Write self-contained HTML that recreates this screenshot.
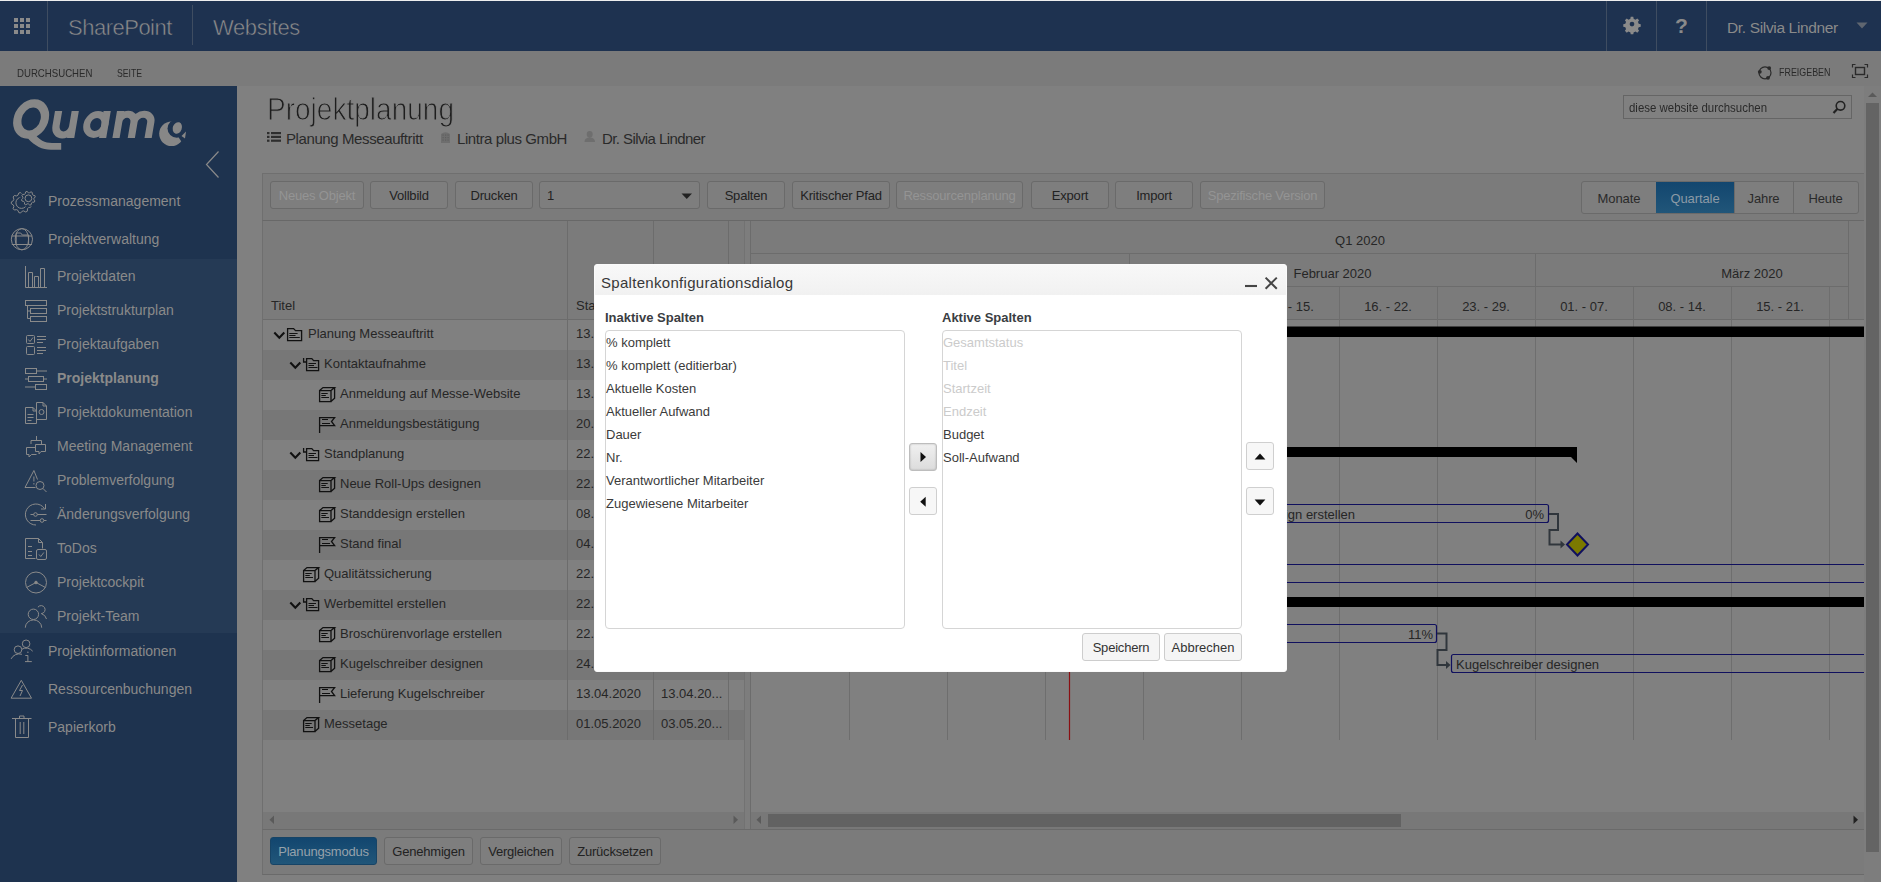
<!DOCTYPE html>
<html><head><meta charset="utf-8">
<style>
*{box-sizing:border-box;margin:0;padding:0}
html,body{width:1881px;height:882px;overflow:hidden;background:#808080;font-family:"Liberation Sans",sans-serif;color:#222}
.a{position:absolute}
.t{position:absolute;white-space:nowrap;line-height:1}
#topline{left:0;top:0;width:1881px;height:1px;background:#eeeeef}
#topbar{left:0;top:1px;width:1881px;height:50px;background:#1e3250}
.sep{position:absolute;width:1px;background:#3f4d61}
#subbar{left:0;top:51px;width:1881px;height:35px;background:#7b7b7b}
#sidebar{left:0;top:86px;width:237px;height:796px;background:#1e334f}
#submenu{left:0;top:259px;width:237px;height:374px;background:#253a55}
.nav{position:absolute;white-space:nowrap;line-height:1;font-size:14px;color:#8a8a8a}
.ic{position:absolute;fill:none;stroke:#8a8a8a;stroke-width:1.1}
#vscroll{left:1864px;top:86px;width:17px;height:796px;background:#7d7d7d}
#vthumb{left:1866px;top:103px;width:13px;height:749px;background:#646464}
.btn{position:absolute;height:28px;border:1px solid #6a6a6a;border-radius:3px;background:#7e7e7e;font-size:13px;color:#222;text-align:center;line-height:27px;white-space:nowrap}
.btn.dis{color:#949494}
.row{position:absolute;left:263px;width:481px;height:30px}
.row.d{background:#777777}
.cell{position:absolute;white-space:nowrap;line-height:1;font-size:13px;color:#222}
.vl{position:absolute;width:1px;background:#6c6c6c}
.hl{position:absolute;height:1px;background:#6c6c6c}
</style></head><body>
<div id="topline" class="a"></div>
<div id="topbar" class="a">
  <!-- waffle -->
  <svg class="a" style="left:14px;top:17px" width="17" height="17" viewBox="0 0 17 17" fill="#8a8a8a">
    <rect x="0" y="0" width="4" height="4"/><rect x="6" y="0" width="4" height="4"/><rect x="12" y="0" width="4" height="4"/>
    <rect x="0" y="6" width="4" height="4"/><rect x="6" y="6" width="4" height="4"/><rect x="12" y="6" width="4" height="4"/>
    <rect x="0" y="12" width="4" height="4"/><rect x="6" y="12" width="4" height="4"/><rect x="12" y="12" width="4" height="4"/>
  </svg>
  <div class="sep" style="left:47px;top:0;height:50px"></div>
  <div class="t" style="left:68px;top:15.5px;font-size:22px;color:#8c8c8c;letter-spacing:-0.5px;-webkit-text-stroke:0.5px #1e3250">SharePoint</div>
  <div class="sep" style="left:192px;top:4px;height:40px"></div>
  <div class="t" style="left:213px;top:15.5px;font-size:22px;color:#8c8c8c;letter-spacing:-0.4px;-webkit-text-stroke:0.5px #1e3250">Websites</div>
  <div class="sep" style="left:1606px;top:0;height:50px"></div>
  <div class="sep" style="left:1656px;top:0;height:50px"></div>
  <div class="sep" style="left:1706px;top:0;height:50px"></div>
</div>
<div id="subbar" class="a">
  <div class="t" style="left:17px;top:17px;font-size:11px;color:#2a2a2a;transform:scaleX(0.875);transform-origin:0 0">DURCHSUCHEN</div>
  <div class="t" style="left:117px;top:17px;font-size:11px;color:#2a2a2a;transform:scaleX(0.79);transform-origin:0 0">SEITE</div>
</div>
<div id="sidebar" class="a"><div id="submenu" class="a" style="top:173px"></div></div>
<svg class="a" style="left:0;top:0" width="237" height="882" viewBox="0 0 237 882">
 <g transform="matrix(1,0,-0.17,1,23.46,0)" fill="none" stroke="#878787" stroke-width="7.2">
  <ellipse cx="27.9" cy="119" rx="13.6" ry="15.6" stroke-width="8.2"/>
  <path d="M54 111 V126 A8.33 9 0 0 0 70.66 126 M70.66 111 V138"/>
  <ellipse cx="93.6" cy="124.5" rx="9.1" ry="10" stroke-width="6.8"/>
  <path d="M102.6 111 V138"/>
  <path d="M116 111 V138 M116 122 A7.65 7.75 0 0 1 131.3 122 V138 M131.3 122 A8.4 7.75 0 0 1 148.1 122 V138"/>
 </g>
 <path fill="#878787" d="M34 133 C39 140, 45 143, 52 143 L61.2 143 L61.2 149.8 L51 149.8 C42 149.8, 35 146, 28 138.5 Z"/>
 <g fill="none" stroke="#8a8a8a" stroke-width="1.2">
  <path d="M218.5 151.5 L206.5 164.5 L218.5 177.5"/>
 </g>
 <g fill="none" stroke="#8a8a8a" stroke-width="1">
  <!-- Prozessmanagement gear -->
<defs><mask id="gm"><rect x="0" y="180" width="60" height="40" fill="#fff"/><circle cx="28.4" cy="198.3" r="8.6" fill="#000"/></mask></defs>
  <path d="M33.90 199.37 L34.88 200.95 L34.24 202.16 L32.38 202.24 L31.53 202.94 L31.11 204.76 L29.80 205.16 L28.42 203.90 L27.33 203.80 L25.75 204.78 L24.54 204.14 L24.46 202.28 L23.76 201.43 L21.94 201.01 L21.54 199.70 L22.80 198.32 L22.90 197.23 L21.92 195.65 L22.56 194.44 L24.42 194.36 L25.27 193.66 L25.69 191.84 L27.00 191.44 L28.38 192.70 L29.47 192.80 L31.05 191.82 L32.26 192.46 L32.34 194.32 L33.04 195.17 L34.86 195.59 L35.26 196.90 L34.00 198.28 L33.90 199.37 Z"/>
  <circle cx="28.4" cy="198.3" r="3.4"/>
  <g mask="url(#gm)"><path d="M29.87 203.53 L31.35 205.44 L30.74 207.11 L28.38 207.62 L27.44 208.74 L27.35 211.16 L25.81 212.04 L23.67 210.91 L22.23 211.17 L20.61 212.96 L18.86 212.65 L17.95 210.41 L16.68 209.68 L14.29 210.01 L13.14 208.65 L13.89 206.35 L13.39 204.97 L11.34 203.69 L11.34 201.91 L13.39 200.63 L13.89 199.25 L13.14 196.95 L14.29 195.59 L16.68 195.92 L17.95 195.19 L18.86 192.95 L20.61 192.64 L22.23 194.43 L23.67 194.69 L25.81 193.56 L27.35 194.44 L27.44 196.86 L28.38 197.98 L30.74 198.49 L31.35 200.16 L29.87 202.07 L29.87 203.53 Z"/><circle cx="21.5" cy="202.8" r="5.6"/></g>
  <!-- Projektverwaltung globe -->
  <circle cx="21.9" cy="239.2" r="10.6"/>
  <ellipse cx="21.9" cy="239.2" rx="6.7" ry="10.6"/>
  <path d="M11.8 236 H32 M11.8 244.5 H32"/>
  <path d="M16.2 244.5 V233 H20.7 L22.3 235 H28.6 V244.5"/>
  <!-- Projektdaten -->
  <path d="M25.5 266 V287.5 H47"/>
  <path d="M28.5 287.5 V272.5 H32.5 V287.5 M34.5 287.5 V276.5 H38.5 V287.5 M40.5 287.5 V268.5 H44.5 V287.5"/>
  <!-- Projektstrukturplan -->
  <rect x="25.5" y="300.5" width="21" height="5"/>
  <rect x="30.5" y="308.5" width="16" height="5"/>
  <rect x="30.5" y="316.5" width="16" height="5"/>
  <path d="M27.5 305.5 V318.5 H30.5 M27.5 311 H30.5"/>
  <!-- Projektaufgaben -->
  <rect x="26.5" y="335.5" width="8" height="8" rx="1"/>
  <rect x="26.5" y="346.5" width="8" height="8" rx="1"/>
  <path d="M28.3 339.5 l1.7 2 l3 -4"/>
  <path d="M37 336.5 h9 M37 339.5 h9 M37 342.5 h6 M37 347.5 h9 M37 350.5 h9 M37 353.5 h6"/>
  <!-- Projektplanung -->
  <rect x="25.5" y="368.5" width="11" height="5"/>
  <path d="M36.5 371 H47"/>
  <rect x="28.5" y="376.5" width="15" height="5"/>
  <path d="M25 379 H28.5 M43.5 379 H47"/>
  <rect x="35.5" y="384.5" width="11" height="5"/>
  <path d="M25 387 H35.5"/>
  <!-- Projektdokumentation -->
  <path d="M25.5 407.5 H33 L36.5 411 V423.5 H25.5 Z M33 407.5 V411 H36.5"/>
  <path d="M27.5 414.5 h6 M27.5 417.5 h6 M27.5 420.5 h4"/>
  <path d="M36.5 419.5 V402.5 H43 L46.5 406 V419.5 Z M43 402.5 V406 H46.5"/>
  <circle cx="41.5" cy="412" r="2.5"/>
  <!-- Meeting Management -->
  <path d="M36.5 436 V440 M31 444 V440.5 H41.5 V444"/>
  <path d="M35.5 444.5 H45.5 V451.5 H41 L39 454 V451.5 H35.5 Z"/>
  <path d="M35 447.5 H26.5 V454.5 H29 L29 457 L31.5 454.5 H36.5"/>
  <!-- Problemverfolgung -->
  <path d="M37.5 479.5 L33.9 470.5 L25 487.5 H35.5"/>
  <path d="M33.9 476.5 V481.5 M33.9 483 V484.5"/>
  <circle cx="40" cy="485.5" r="4"/>
  <path d="M43 488.5 L46.5 492"/>
  <!-- Aenderungsverfolgung -->
  <path d="M44.5 508.5 A10.5 10.5 0 1 0 36 525"/>
  <path d="M45.5 504 V509 H41"/>
  <path d="M30.5 514.5 H46.5 M30.5 520.5 H46.5"/>
  <circle cx="35.5" cy="514.5" r="1.8" fill="#253a55"/>
  <circle cx="42" cy="520.5" r="1.8" fill="#253a55"/>
  <!-- ToDos -->
  <path d="M35.5 558.5 H25.5 V538.5 H38.5 L42.5 542.5 V548.5 M38.5 538.5 V542.5 H42.5"/>
  <path d="M28 546.5 h4 M28 551.5 h4 M28 555.5 h4"/>
  <rect x="36.5" y="549.5" width="10" height="10" rx="1.5"/>
  <path d="M39 554.5 l1.8 2 l3 -4"/>
  <!-- Projektcockpit -->
  <circle cx="36" cy="582.5" r="10.5"/>
  <path d="M26.5 587.5 L36 582.5 L45.5 587.5"/>
  <circle cx="36" cy="582.5" r="1.3" fill="#8a8a8a"/>
  <!-- Projekt-Team -->
  <circle cx="33.4" cy="614.3" r="5.2"/>
  <path d="M25.3 627.7 A8.2 7.8 0 0 1 41.7 627.7"/>
  <path d="M37.9 607.2 A4 4 0 1 1 41.3 613.6 A7.5 7.5 0 0 1 46.5 619"/>
  <!-- Projektinformationen -->
  <circle cx="18" cy="649.7" r="3.8"/>
  <circle cx="26.1" cy="643.8" r="3.8"/>
  <path d="M11.1 658.9 A9 9 0 0 1 21.9 654.3 M21.9 649.2 A8.5 8.5 0 0 1 32.7 651.2"/>
  <path d="M25.3 655.5 H27.9 V661.6 M25 661.6 H31.8"/>
  <circle cx="27.9" cy="652.2" r="0.7" fill="#8a8a8a" stroke="none"/>
  <!-- Ressourcenbuchungen -->
  <path d="M21.3 680.3 L31.5 698.2 H11.1 Z"/>
  <path d="M22.5 685 L19.5 690.5 H22.5 L20 696"/>
  <!-- Papierkorb -->
  <path d="M12 718.5 H31.5 M19.5 718.5 V716 H24 V718.5"/>
  <path d="M15.5 718.5 V737.5 H28.5 V718.5 M20.2 722 V734 M23.8 722 V734"/>
 </g>
 <!-- Quam small logo -->
 <defs><mask id="cm"><rect x="150" y="110" width="50" height="50" fill="#fff"/><circle cx="176.8" cy="128.5" r="9.3" fill="#000"/><path d="M176 133.3 L184.4 146.2 L200 146.2 L200 110 L176 110 Z" fill="#000"/></mask></defs>
 <circle cx="171.5" cy="133.8" r="12.3" fill="#878787" mask="url(#cm)"/>
 <ellipse cx="177.3" cy="127.9" rx="4.5" ry="5.9" transform="rotate(20 177.3 127.9)" fill="#878787"/>
 <path d="M181.5 136 L186 131.5 L185 138.5 Z" fill="#878787"/>
</svg>
<div class="nav" style="left:48px;top:194px">Prozessmanagement</div>
<div class="nav" style="left:48px;top:232px">Projektverwaltung</div>
<div class="nav" style="left:57px;top:269px">Projektdaten</div>
<div class="nav" style="left:57px;top:303px">Projektstrukturplan</div>
<div class="nav" style="left:57px;top:337px">Projektaufgaben</div>
<div class="nav" style="left:57px;top:371px;font-weight:bold">Projektplanung</div>
<div class="nav" style="left:57px;top:405px">Projektdokumentation</div>
<div class="nav" style="left:57px;top:439px">Meeting Management</div>
<div class="nav" style="left:57px;top:473px">Problemverfolgung</div>
<div class="nav" style="left:57px;top:507px">Änderungsverfolgung</div>
<div class="nav" style="left:57px;top:541px">ToDos</div>
<div class="nav" style="left:57px;top:575px">Projektcockpit</div>
<div class="nav" style="left:57px;top:609px">Projekt-Team</div>
<div class="nav" style="left:48px;top:644px">Projektinformationen</div>
<div class="nav" style="left:48px;top:682px">Ressourcenbuchungen</div>
<div class="nav" style="left:48px;top:720px">Papierkorb</div>
<!--MAIN-->
<div class="t" style="left:267px;top:93px;font-size:32px;color:#1e1e1e;transform:scaleX(0.876);transform-origin:0 0;-webkit-text-stroke:1px #808080">Projektplanung</div>
<svg class="a" style="left:0;top:0" width="1881" height="882" viewBox="0 0 1881 882">
 <g fill="#2e2e2e">
  <rect x="267" y="132" width="2.5" height="2.2"/><rect x="271" y="132" width="10" height="2.2"/>
  <rect x="267" y="135.8" width="2.5" height="2.2"/><rect x="271" y="135.8" width="10" height="2.2"/>
  <rect x="267" y="139.6" width="2.5" height="2.2"/><rect x="271" y="139.6" width="10" height="2.2"/>
 </g>
 <g fill="#6e6e6e">
  <path d="M441 134 Q445.5 130.5 450 134 V143 H441 Z"/>
  <path d="M589.7 131 a3 3.2 0 1 1 0 6.4 a3 3.2 0 1 1 0 -6.4 Z M584.5 142 Q584.5 137.5 589.7 137.5 Q595 137.5 595 142 Z"/>
 </g>
 <g fill="#5e5e5e"><rect x="442.5" y="134.5" width="1.2" height="1.2"/><rect x="445" y="134.5" width="1.2" height="1.2"/><rect x="447.5" y="134.5" width="1.2" height="1.2"/>
 <rect x="442.5" y="137" width="1.2" height="1.2"/><rect x="445" y="137" width="1.2" height="1.2"/><rect x="447.5" y="137" width="1.2" height="1.2"/>
 <rect x="442.5" y="139.5" width="1.2" height="1.2"/><rect x="445" y="139.5" width="1.2" height="1.2"/><rect x="447.5" y="139.5" width="1.2" height="1.2"/></g>
</svg>
<div class="t" style="left:286px;top:131px;font-size:15px;color:#2a2a2a;letter-spacing:-0.4px">Planung Messeauftritt</div>
<div class="t" style="left:457px;top:131px;font-size:15px;color:#2a2a2a;letter-spacing:-0.42px">Lintra plus GmbH</div>
<div class="t" style="left:602px;top:131px;font-size:15px;color:#2a2a2a;letter-spacing:-0.58px">Dr. Silvia Lindner</div>
<div class="a" style="left:1623px;top:95px;width:229px;height:24px;border:1px solid #656565"></div>
<div class="t" style="left:1629px;top:101px;font-size:13px;color:#2a2a2a;transform:scaleX(0.88);transform-origin:0 0">diese website durchsuchen</div>
<svg class="a" style="left:1830px;top:99px" width="18" height="18" viewBox="0 0 18 18" fill="none" stroke="#222" stroke-width="1.6">
 <circle cx="10.5" cy="6.8" r="4.3"/><path d="M7.5 9.8 L3.5 14" stroke-width="2.2"/></svg>
<svg class="a" style="left:1752px;top:60px" width="24" height="24" viewBox="0 0 24 24">
 <circle cx="13" cy="12.8" r="6" fill="none" stroke="#2a2a2a" stroke-width="1.2"/>
 <g fill="#2a2a2a"><circle cx="17.2" cy="8.1" r="1.9"/><circle cx="7.8" cy="11.8" r="1.9"/><circle cx="16" cy="17.8" r="1.9"/></g></svg>
<div class="t" style="left:1779px;top:67px;font-size:11px;color:#2a2a2a;transform:scaleX(0.81);transform-origin:0 0">FREIGEBEN</div>
<svg class="a" style="left:1851px;top:63px" width="18" height="16" viewBox="0 0 18 16" fill="none" stroke="#2a2a2a" stroke-width="1.2">
 <path d="M1.5 4.5 V1.5 H4.5 M13.5 1.5 H16.5 V4.5 M16.5 11.5 V14.5 H13.5 M4.5 14.5 H1.5 V11.5"/><rect x="4.5" y="4.5" width="9" height="7" stroke-width="1.4"/></svg>
<div class="a" style="left:262px;top:173px;width:1602px;height:48px;background:#7b7b7b;border-top:1px solid #6f6f6f;border-left:1px solid #6f6f6f;border-bottom:1px solid #686868"></div>
<div class="btn dis" style="left:270px;top:181px;width:94px;letter-spacing:-0.2px">Neues Objekt</div>
<div class="btn" style="left:370px;top:181px;width:78px;letter-spacing:-0.2px">Vollbild</div>
<div class="btn" style="left:455px;top:181px;width:78px;letter-spacing:-0.2px">Drucken</div>
<div class="btn" style="left:707px;top:181px;width:78px;letter-spacing:-0.2px">Spalten</div>
<div class="btn" style="left:792px;top:181px;width:98px;letter-spacing:-0.2px">Kritischer Pfad</div>
<div class="btn dis" style="left:896px;top:181px;width:127px;letter-spacing:-0.2px">Ressourcenplanung</div>
<div class="btn" style="left:1031px;top:181px;width:78px;letter-spacing:-0.2px">Export</div>
<div class="btn" style="left:1115px;top:181px;width:78px;letter-spacing:-0.2px">Import</div>
<div class="btn dis" style="left:1200px;top:181px;width:125px;letter-spacing:-0.2px">Spezifische Version</div>
<div class="btn" style="left:539px;top:181px;width:161px;text-align:left;padding-left:7px">1</div>
<svg class="a" style="left:681px;top:193px" width="12" height="7" viewBox="0 0 12 7"><path d="M0.5 0.5 H11 L5.75 6 Z" fill="#222"/></svg>
<div class="a" style="left:1581px;top:181px;width:278px;height:33px;border:1px solid #6a6a6a;border-radius:3px;background:#7e7e7e"></div>
<div class="a" style="left:1656px;top:182px;width:78px;height:31px;background:linear-gradient(#12466f,#215679)"></div>
<div class="vl" style="left:1734px;top:182px;height:31px;background:#6a6a6a"></div>
<div class="vl" style="left:1793px;top:182px;height:31px;background:#6a6a6a"></div>
<div class="t" style="left:1582px;width:74px;text-align:center;top:192px;font-size:13px;color:#2a2a2a;letter-spacing:-0.1px">Monate</div>
<div class="t" style="left:1656px;width:78px;text-align:center;top:192px;font-size:13px;color:#8c9aa6;letter-spacing:-0.1px">Quartale</div>
<div class="t" style="left:1734px;width:59px;text-align:center;top:192px;font-size:13px;color:#2a2a2a;letter-spacing:-0.1px">Jahre</div>
<div class="t" style="left:1793px;width:65px;text-align:center;top:192px;font-size:13px;color:#2a2a2a;letter-spacing:-0.1px">Heute</div>
<div class="a" style="left:263px;top:221px;width:481px;height:99px;background:#7b7b7b"></div>
<div class="a" style="left:751px;top:221px;width:1113px;height:99px;background:#7b7b7b"></div>
<div class="a" style="left:744px;top:221px;width:7px;height:608px;background:#7d7d7d"></div>
<div class="t" style="left:271px;top:299px;font-size:13px;color:#262626">Titel</div>
<div class="t" style="left:576px;top:299px;font-size:13px;color:#262626">Start</div>
<div class="a" style="left:263px;top:320px;width:481px;height:30px;background:#808080"></div>
<div class="t" style="left:308px;top:327px;font-size:13px;color:#262626">Planung Messeauftritt</div>
<div class="t" style="left:576px;top:327px;font-size:13px;color:#262626">13.03.2020</div>
<div class="a" style="left:263px;top:350px;width:481px;height:30px;background:#777777"></div>
<div class="t" style="left:324px;top:357px;font-size:13px;color:#262626">Kontaktaufnahme</div>
<div class="t" style="left:576px;top:357px;font-size:13px;color:#262626">13.03.2020</div>
<div class="a" style="left:263px;top:380px;width:481px;height:30px;background:#808080"></div>
<div class="t" style="left:340px;top:387px;font-size:13px;color:#262626">Anmeldung auf Messe-Website</div>
<div class="t" style="left:576px;top:387px;font-size:13px;color:#262626">13.03.2020</div>
<div class="a" style="left:263px;top:410px;width:481px;height:30px;background:#777777"></div>
<div class="t" style="left:340px;top:417px;font-size:13px;color:#262626">Anmeldungsbestätigung</div>
<div class="t" style="left:576px;top:417px;font-size:13px;color:#262626">20.03.2020</div>
<div class="a" style="left:263px;top:440px;width:481px;height:30px;background:#808080"></div>
<div class="t" style="left:324px;top:447px;font-size:13px;color:#262626">Standplanung</div>
<div class="t" style="left:576px;top:447px;font-size:13px;color:#262626">22.03.2020</div>
<div class="a" style="left:263px;top:470px;width:481px;height:30px;background:#777777"></div>
<div class="t" style="left:340px;top:477px;font-size:13px;color:#262626">Neue Roll-Ups designen</div>
<div class="t" style="left:576px;top:477px;font-size:13px;color:#262626">22.03.2020</div>
<div class="a" style="left:263px;top:500px;width:481px;height:30px;background:#808080"></div>
<div class="t" style="left:340px;top:507px;font-size:13px;color:#262626">Standdesign erstellen</div>
<div class="t" style="left:576px;top:507px;font-size:13px;color:#262626">08.03.2020</div>
<div class="a" style="left:263px;top:530px;width:481px;height:30px;background:#777777"></div>
<div class="t" style="left:340px;top:537px;font-size:13px;color:#262626">Stand final</div>
<div class="t" style="left:576px;top:537px;font-size:13px;color:#262626">04.03.2020</div>
<div class="a" style="left:263px;top:560px;width:481px;height:30px;background:#808080"></div>
<div class="t" style="left:324px;top:567px;font-size:13px;color:#262626">Qualitätssicherung</div>
<div class="t" style="left:576px;top:567px;font-size:13px;color:#262626">22.03.2020</div>
<div class="a" style="left:263px;top:590px;width:481px;height:30px;background:#777777"></div>
<div class="t" style="left:324px;top:597px;font-size:13px;color:#262626">Werbemittel erstellen</div>
<div class="t" style="left:576px;top:597px;font-size:13px;color:#262626">22.03.2020</div>
<div class="a" style="left:263px;top:620px;width:481px;height:30px;background:#808080"></div>
<div class="t" style="left:340px;top:627px;font-size:13px;color:#262626">Broschürenvorlage erstellen</div>
<div class="t" style="left:576px;top:627px;font-size:13px;color:#262626">22.03.2020</div>
<div class="a" style="left:263px;top:650px;width:481px;height:30px;background:#777777"></div>
<div class="t" style="left:340px;top:657px;font-size:13px;color:#262626">Kugelschreiber designen</div>
<div class="t" style="left:576px;top:657px;font-size:13px;color:#262626">24.03.2020</div>
<div class="a" style="left:263px;top:680px;width:481px;height:30px;background:#808080"></div>
<div class="t" style="left:340px;top:687px;font-size:13px;color:#262626">Lieferung Kugelschreiber</div>
<div class="t" style="left:576px;top:687px;font-size:13px;color:#262626">13.04.2020</div>
<div class="t" style="left:661px;top:687px;font-size:13px;color:#262626">13.04.20...</div>
<div class="a" style="left:263px;top:710px;width:481px;height:30px;background:#777777"></div>
<div class="t" style="left:324px;top:717px;font-size:13px;color:#262626">Messetage</div>
<div class="t" style="left:576px;top:717px;font-size:13px;color:#262626">01.05.2020</div>
<div class="t" style="left:661px;top:717px;font-size:13px;color:#262626">03.05.20...</div>
<svg class="a" style="left:0;top:0" width="1881" height="882" viewBox="0 0 1881 882"><g fill="none" stroke="#111" stroke-width="1.3"><path d="M274.3 332.6 L279.3 337.8 L284.3 332.6" stroke-width="2.1"/><path d="M287.6 340.6 V328.6 H293.6 L295.5 330.6 H301.6 V340.6 Z"/><path d="M289.3 333.5 H297.6 M289.3 335.5 H295.5 M289.3 337.5 H299.8" stroke-width="1.1"/><path d="M290.3 362.6 L295.3 367.8 L300.3 362.6" stroke-width="2.1"/><path d="M303.6 358 V362 H306.5"/><path d="M306.6 370.6 V358.6 H311.8 L313.6 360.6 H318.6 V370.6 Z"/><path d="M308.5 363.5 H316 M308.5 365.5 H314 M308.5 367.5 H317.5" stroke-width="1.1"/><path d="M319.6 390.6 H331 V401.6 H319.6 Z M319.6 390.6 L323 387.6 H334.6 L331 390.6 M334.6 387.6 V398.3 L331 401.6"/><path d="M321.3 393.5 H327.7 M321.3 395.5 H325.8 M321.3 397.5 H329" stroke-width="1.1"/><path d="M319.6 433 V417.6 H334.6 L331.5 421.5 L334.6 425.6 H319.6"/><path d="M322 419.5 H328 M322 423.5 H330" stroke-width="1.1"/><path d="M290.3 452.6 L295.3 457.8 L300.3 452.6" stroke-width="2.1"/><path d="M303.6 448 V452 H306.5"/><path d="M306.6 460.6 V448.6 H311.8 L313.6 450.6 H318.6 V460.6 Z"/><path d="M308.5 453.5 H316 M308.5 455.5 H314 M308.5 457.5 H317.5" stroke-width="1.1"/><path d="M319.6 480.6 H331 V491.6 H319.6 Z M319.6 480.6 L323 477.6 H334.6 L331 480.6 M334.6 477.6 V488.3 L331 491.6"/><path d="M321.3 483.5 H327.7 M321.3 485.5 H325.8 M321.3 487.5 H329" stroke-width="1.1"/><path d="M319.6 510.6 H331 V521.6 H319.6 Z M319.6 510.6 L323 507.6 H334.6 L331 510.6 M334.6 507.6 V518.3 L331 521.6"/><path d="M321.3 513.5 H327.7 M321.3 515.5 H325.8 M321.3 517.5 H329" stroke-width="1.1"/><path d="M319.6 553 V537.6 H334.6 L331.5 541.5 L334.6 545.6 H319.6"/><path d="M322 539.5 H328 M322 543.5 H330" stroke-width="1.1"/><path d="M303.6 570.6 H315 V581.6 H303.6 Z M303.6 570.6 L307 567.6 H318.6 L315 570.6 M318.6 567.6 V578.3 L315 581.6"/><path d="M305.3 573.5 H311.7 M305.3 575.5 H309.8 M305.3 577.5 H313" stroke-width="1.1"/><path d="M290.3 602.6 L295.3 607.8 L300.3 602.6" stroke-width="2.1"/><path d="M303.6 598 V602 H306.5"/><path d="M306.6 610.6 V598.6 H311.8 L313.6 600.6 H318.6 V610.6 Z"/><path d="M308.5 603.5 H316 M308.5 605.5 H314 M308.5 607.5 H317.5" stroke-width="1.1"/><path d="M319.6 630.6 H331 V641.6 H319.6 Z M319.6 630.6 L323 627.6 H334.6 L331 630.6 M334.6 627.6 V638.3 L331 641.6"/><path d="M321.3 633.5 H327.7 M321.3 635.5 H325.8 M321.3 637.5 H329" stroke-width="1.1"/><path d="M319.6 660.6 H331 V671.6 H319.6 Z M319.6 660.6 L323 657.6 H334.6 L331 660.6 M334.6 657.6 V668.3 L331 671.6"/><path d="M321.3 663.5 H327.7 M321.3 665.5 H325.8 M321.3 667.5 H329" stroke-width="1.1"/><path d="M319.6 703 V687.6 H334.6 L331.5 691.5 L334.6 695.6 H319.6"/><path d="M322 689.5 H328 M322 693.5 H330" stroke-width="1.1"/><path d="M303.6 720.6 H315 V731.6 H303.6 Z M303.6 720.6 L307 717.6 H318.6 L315 720.6 M318.6 717.6 V728.3 L315 731.6"/><path d="M305.3 723.5 H311.7 M305.3 725.5 H309.8 M305.3 727.5 H313" stroke-width="1.1"/></g></svg>
<div class="vl" style="left:567px;top:221px;height:519px"></div>
<div class="vl" style="left:653px;top:221px;height:519px"></div>
<div class="vl" style="left:728px;top:221px;height:519px"></div>
<div class="hl" style="left:263px;top:319px;width:481px"></div>
<div class="vl" style="left:744px;top:221px;height:608px;background:#727272"></div>
<div class="vl" style="left:750px;top:221px;height:608px;background:#6c6c6c"></div>
<div class="vl" style="left:262px;top:221px;height:654px;background:#6f6f6f"></div>
<div class="a" style="left:263px;top:812px;width:481px;height:17px;background:#787878"></div>
<svg class="a" style="left:268px;top:815px" width="8" height="10" viewBox="0 0 8 10"><path d="M6 0.5 V9 L1.5 4.75 Z" fill="#5a5a5a"/></svg>
<svg class="a" style="left:732px;top:815px" width="8" height="10" viewBox="0 0 8 10"><path d="M1.5 0.5 V9 L6 4.75 Z" fill="#5a5a5a"/></svg>
<svg class="a" style="left:0;top:0" width="1881" height="882" viewBox="0 0 1881 882" shape-rendering="crispEdges"><path d="M751 253.5 H1848 M751 286.5 H1848 M751 319.5 H1864" stroke="#6c6c6c"/><path d="M1848.5 221 V320 M1129.5 254 V287 M1535.5 254 V287" stroke="#6c6c6c"/><path d="M849.5 287 V740" stroke="#6e6e6e"/><path d="M947.5 287 V740" stroke="#6e6e6e"/><path d="M1045.5 287 V740" stroke="#6e6e6e"/><path d="M1143.5 287 V740" stroke="#6e6e6e"/><path d="M1241.5 287 V740" stroke="#6e6e6e"/><path d="M1339.5 287 V740" stroke="#6e6e6e"/><path d="M1437.5 287 V740" stroke="#6e6e6e"/><path d="M1535.5 287 V740" stroke="#6e6e6e"/><path d="M1633.5 287 V740" stroke="#6e6e6e"/><path d="M1731.5 287 V740" stroke="#6e6e6e"/><path d="M1829.5 287 V740" stroke="#6e6e6e"/></svg>
<div class="t" style="left:751px;width:1218px;text-align:center;top:234px;font-size:13px;color:#262626">Q1 2020</div>
<div class="t" style="left:1129px;width:407px;text-align:center;top:267px;font-size:13px;color:#262626">Februar 2020</div>
<div class="t" style="left:1535px;width:434px;text-align:center;top:267px;font-size:13px;color:#262626">März 2020</div>
<div class="t" style="left:751px;width:379px;text-align:center;top:267px;font-size:13px;color:#262626">Januar 2020</div>
<div class="t" style="left:751px;width:98px;text-align:center;top:300px;font-size:13px;color:#262626">05. - 11.</div>
<div class="t" style="left:849px;width:98px;text-align:center;top:300px;font-size:13px;color:#262626">12. - 18.</div>
<div class="t" style="left:947px;width:98px;text-align:center;top:300px;font-size:13px;color:#262626">19. - 25.</div>
<div class="t" style="left:1045px;width:98px;text-align:center;top:300px;font-size:13px;color:#262626">26. - 01.</div>
<div class="t" style="left:1143px;width:98px;text-align:center;top:300px;font-size:13px;color:#262626">02. - 08.</div>
<div class="t" style="left:1241px;width:98px;text-align:center;top:300px;font-size:13px;color:#262626">09. - 15.</div>
<div class="t" style="left:1339px;width:98px;text-align:center;top:300px;font-size:13px;color:#262626">16. - 22.</div>
<div class="t" style="left:1437px;width:98px;text-align:center;top:300px;font-size:13px;color:#262626">23. - 29.</div>
<div class="t" style="left:1535px;width:98px;text-align:center;top:300px;font-size:13px;color:#262626">01. - 07.</div>
<div class="t" style="left:1633px;width:98px;text-align:center;top:300px;font-size:13px;color:#262626">08. - 14.</div>
<div class="t" style="left:1731px;width:98px;text-align:center;top:300px;font-size:13px;color:#262626">15. - 21.</div>
<svg class="a" style="left:0;top:0" width="1881" height="882" viewBox="0 0 1881 882"><rect x="751" y="326.5" width="1113" height="10.5" fill="#000"/><path d="M1000 447 H1577 V463 L1571 457 H1000 Z" fill="#000"/><rect x="1100.5" y="504.5" width="448" height="18" rx="2" fill="none" stroke="#10105e" stroke-width="1.2"/><rect x="1000.5" y="564.5" width="1000" height="18" rx="2" fill="none" stroke="#10105e" stroke-width="1.2"/><rect x="751" y="597" width="1113" height="10" fill="#000"/><rect x="1000.5" y="624.5" width="436" height="18" rx="2" fill="none" stroke="#10105e" stroke-width="1.2"/><rect x="1451.5" y="654.5" width="600" height="18" rx="2" fill="none" stroke="#10105e" stroke-width="1.2"/><path d="M1549 514 H1558 V530 H1549.5 V544.5 H1562" fill="none" stroke="#30363c" stroke-width="2"/><path d="M1560.5 540.5 L1565 544.5 L1560.5 548.5 Z" fill="#30363c"/><path d="M1437 633.5 H1446.5 V650 H1437.5 V665 H1447" fill="none" stroke="#30363c" stroke-width="2"/><path d="M1446 661 L1450.5 665 L1446 669 Z" fill="#30363c"/><path d="M1577.5 533.5 L1588 544.5 L1577.5 555.5 L1567 544.5 Z" fill="#7b7900" stroke="#10105e" stroke-width="2"/><path d="M1069.5 320 V740" stroke="#8a0f12" stroke-width="1.2"/></svg>
<div class="t" style="left:1200px;width:344px;text-align:right;top:508px;font-size:13px;color:#262626">0%</div>
<div class="t" style="left:1290px;width:143px;text-align:right;top:628px;font-size:13px;color:#262626">11%</div>
<div class="t" style="left:1456px;top:658px;font-size:13px;color:#262626">Kugelschreiber designen</div>
<div class="t" style="left:1230px;top:508px;font-size:13px;color:#262626">Standdesign erstellen</div>
<div class="a" style="left:1864px;top:86px;width:17px;height:796px;background:#7d7d7d"></div>
<div class="a" style="left:1866px;top:103px;width:13px;height:749px;background:#646464"></div>
<svg class="a" style="left:1866px;top:90px" width="13" height="9" viewBox="0 0 13 9"><path d="M2 7 L6.5 2.5 L11 7 Z" fill="#5a5a5a"/></svg>
<div class="a" style="left:751px;top:812px;width:1113px;height:17px;background:#787878"></div>
<div class="a" style="left:768px;top:814px;width:633px;height:13px;background:#626262"></div>
<svg class="a" style="left:755px;top:815px" width="8" height="10" viewBox="0 0 8 10"><path d="M6 0.5 V9 L1.5 4.75 Z" fill="#5a5a5a"/></svg>
<svg class="a" style="left:1852px;top:815px" width="8" height="10" viewBox="0 0 8 10"><path d="M1.5 0.5 V9 L6 4.75 Z" fill="#222"/></svg>
<div class="a" style="left:262px;top:829px;width:1602px;height:46px;background:#7b7b7b;border-top:1px solid #6a6a6a;border-left:1px solid #6f6f6f;border-bottom:1px solid #6a6a6a"></div>
<div class="btn" style="left:270px;top:837px;width:107px;background:linear-gradient(#12466f,#215679);border-color:#174466;color:#96a2ab;letter-spacing:-0.2px">Planungsmodus</div>
<div class="btn" style="left:384px;top:837px;width:89px;letter-spacing:-0.2px">Genehmigen</div>
<div class="btn" style="left:480px;top:837px;width:82px;letter-spacing:-0.2px">Vergleichen</div>
<div class="btn" style="left:569px;top:837px;width:92px;letter-spacing:-0.2px">Zurücksetzen</div>
<!--/MAIN-->
<!--DIALOG-->
<svg class="a" style="left:1621.6px;top:15px" width="20" height="20" viewBox="1 1 22 22">
 <g fill="#8a8a8a"><path d="M10.6 3 h2.8 l0.5 2.3 a6.5 6.5 0 0 1 1.9 0.8 l2 -1.3 2 2 -1.3 2 a6.5 6.5 0 0 1 0.8 1.9 l2.3 0.5 v2.8 l-2.3 0.5 a6.5 6.5 0 0 1 -0.8 1.9 l1.3 2 -2 2 -2 -1.3 a6.5 6.5 0 0 1 -1.9 0.8 l-0.5 2.3 h-2.8 l-0.5 -2.3 a6.5 6.5 0 0 1 -1.9 -0.8 l-2 1.3 -2 -2 1.3 -2 a6.5 6.5 0 0 1 -0.8 -1.9 l-2.3 -0.5 v-2.8 l2.3 -0.5 a6.5 6.5 0 0 1 0.8 -1.9 l-1.3 -2 2 -2 2 1.3 a6.5 6.5 0 0 1 1.9 -0.8 z"/></g>
 <circle cx="12" cy="11" r="2.6" fill="#1e3250"/></svg>
<div class="t" style="left:1675px;top:15px;font-size:21px;font-weight:bold;color:#8a8a8a">?</div>
<div class="t" style="left:1727px;top:20px;font-size:15.5px;color:#8a8a8a;letter-spacing:-0.35px">Dr. Silvia Lindner</div>
<svg class="a" style="left:1856px;top:22px" width="12" height="8" viewBox="0 0 12 8"><path d="M0.5 0.5 H11.5 L6 6.5 Z" fill="#5f6670"/></svg>
<div class="a" style="left:594px;top:264px;width:693px;height:408px;background:#fff;border-radius:3px;border:1px solid #fafafa"></div>
<div class="a" style="left:595px;top:265px;width:691px;height:30px;background:linear-gradient(#f8f8f8,#f1f1f1);border-radius:2px 2px 0 0"></div>
<div class="t" style="left:601px;top:275px;font-size:15px;color:#383838;letter-spacing:0.3px">Spaltenkonfigurationsdialog</div>
<svg class="a" style="left:1240px;top:272px" width="42" height="22" viewBox="0 0 42 22" fill="none" stroke="#454545" stroke-width="2.1"><path d="M5 14 H17"/><path d="M25.6 5.6 L36.8 16.8 M36.8 5.6 L25.6 16.8" stroke-width="2"/></svg>
<div class="t" style="left:605px;top:311px;font-size:13px;font-weight:bold;color:#3a3d42">Inaktive Spalten</div>
<div class="t" style="left:942px;top:311px;font-size:13px;font-weight:bold;color:#3a3d42">Aktive Spalten</div>
<div class="a" style="left:605px;top:330px;width:300px;height:299px;border:1px solid #d5d5d5;border-radius:4px"></div>
<div class="a" style="left:942px;top:330px;width:300px;height:299px;border:1px solid #d5d5d5;border-radius:4px"></div>
<div class="t" style="left:606px;top:336px;font-size:13px;color:#3b3b3b">% komplett</div>
<div class="t" style="left:606px;top:359px;font-size:13px;color:#3b3b3b">% komplett (editierbar)</div>
<div class="t" style="left:606px;top:382px;font-size:13px;color:#3b3b3b">Aktuelle Kosten</div>
<div class="t" style="left:606px;top:405px;font-size:13px;color:#3b3b3b">Aktueller Aufwand</div>
<div class="t" style="left:606px;top:428px;font-size:13px;color:#3b3b3b">Dauer</div>
<div class="t" style="left:606px;top:451px;font-size:13px;color:#3b3b3b">Nr.</div>
<div class="t" style="left:606px;top:474px;font-size:13px;color:#3b3b3b">Verantwortlicher Mitarbeiter</div>
<div class="t" style="left:606px;top:497px;font-size:13px;color:#3b3b3b">Zugewiesene Mitarbeiter</div>
<div class="t" style="left:943px;top:336px;font-size:13px;color:#cbcbcb">Gesamtstatus</div>
<div class="t" style="left:943px;top:359px;font-size:13px;color:#cbcbcb">Titel</div>
<div class="t" style="left:943px;top:382px;font-size:13px;color:#cbcbcb">Startzeit</div>
<div class="t" style="left:943px;top:405px;font-size:13px;color:#cbcbcb">Endzeit</div>
<div class="t" style="left:943px;top:428px;font-size:13px;color:#3b3b3b">Budget</div>
<div class="t" style="left:943px;top:451px;font-size:13px;color:#3b3b3b">Soll-Aufwand</div>
<div class="a" style="left:909px;top:443px;width:28px;height:28px;border-radius:3px;background:linear-gradient(#f0f0f0,#dcdcdc);border:1px solid #bdbdbd;box-shadow:inset 0 0 2px rgba(0,0,0,0.25)"></div>
<svg class="a" style="left:909px;top:443px" width="28" height="28" viewBox="0 0 28 28"><path d="M11.5 9 L17 14 L11.5 19 Z" fill="#111"/></svg>
<div class="a" style="left:909px;top:487px;width:28px;height:28px;border-radius:3px;background:#f7f7f7;border:1px solid #cfcfcf"></div>
<svg class="a" style="left:909px;top:487px" width="28" height="28" viewBox="0 0 28 28"><path d="M16.7 9.8 L11.2 14.8 L16.7 19.8 Z" fill="#111"/></svg>
<div class="a" style="left:1246px;top:442px;width:28px;height:28px;border-radius:3px;background:#f7f7f7;border:1px solid #cfcfcf"></div>
<svg class="a" style="left:1246px;top:442px" width="28" height="28" viewBox="0 0 28 28"><path d="M8.6 17.5 L14 11.5 L19.4 17.5 Z" fill="#111"/></svg>
<div class="a" style="left:1246px;top:487px;width:28px;height:28px;border-radius:3px;background:#f7f7f7;border:1px solid #cfcfcf"></div>
<svg class="a" style="left:1246px;top:487px" width="28" height="28" viewBox="0 0 28 28"><path d="M8.6 12.6 L14 18.6 L19.4 12.6 Z" fill="#111"/></svg>
<div class="a" style="left:1082px;top:633px;width:78px;height:28px;border-radius:3px;background:#f5f5f5;border:1px solid #cdcdcd"></div>
<div class="a" style="left:1164px;top:633px;width:78px;height:28px;border-radius:3px;background:#f5f5f5;border:1px solid #cdcdcd"></div>
<div class="t" style="left:1082px;width:78px;text-align:center;top:641px;font-size:13px;color:#333;letter-spacing:-0.2px">Speichern</div>
<div class="t" style="left:1164px;width:78px;text-align:center;top:641px;font-size:13px;color:#333">Abbrechen</div>
<!--/DIALOG-->
</body></html>
